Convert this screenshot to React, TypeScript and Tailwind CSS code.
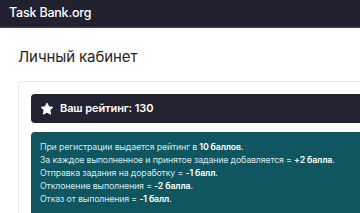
export default function App() {
  return (
    <div className="h-[213px] w-[360px] overflow-hidden bg-white font-['Inter',sans-serif]">
      <header className="flex h-[28px] items-center border-b border-[#4a4a55] bg-[#21212f] px-[9px]">
        <span className="text-[12.5px] font-medium leading-none tracking-[-0.2px] text-white">Task Bank.org</span>
      </header>

      <main className="px-[18px] pt-[18px]">
        <h1 className="text-[15px] font-normal leading-[22px] tracking-[-0.1px] text-[#1f1f24]">Личный кабинет</h1>

        <div className="mt-[13px] w-[440px] rounded-[4px] border border-[#e6e6ea] px-[12px] pt-[12px]">
          <div className="flex h-[29px] items-center gap-[6px] rounded-[4px] bg-[#222230] px-[9px]">
            <svg viewBox="0 0 24 24" className="h-[14px] w-[14px]" fill="white">
              <path
                d="M12 1.8l3.1 6.3 6.9 1-5 4.9 1.2 6.9L12 17.6l-6.2 3.3L7 14 2 9.1l6.9-1z"
                stroke="white"
                strokeWidth="1.6"
                strokeLinejoin="round"
              />
            </svg>
            <span className="text-[11px] font-semibold tracking-[-0.1px] text-white">Ваш рейтинг: 130</span>
          </div>

          <div className="mt-[9px] rounded-[4px] bg-[#0f5660] px-[9px] pt-[8px] pb-[12px] text-[8.8px] leading-[13px] tracking-[-0.15px] text-[#d3e9eb]">
            <p>
              При регистрации выдается рейтинг в <b className="font-semibold text-white">10 баллов</b>.
            </p>
            <p>
              За каждое выполненное и принятое задание добавляется = <b className="font-semibold text-white">+2 балла</b>.
            </p>
            <p>
              Отправка задания на доработку = <b className="font-semibold text-white">-1 балл</b>.
            </p>
            <p>
              Отклонение выполнения = <b className="font-semibold text-white">-2 балла</b>.
            </p>
            <p>
              Отказ от выполнения = <b className="font-semibold text-white">-1 балл</b>.
            </p>
          </div>
        </div>
      </main>
    </div>
  )
}
